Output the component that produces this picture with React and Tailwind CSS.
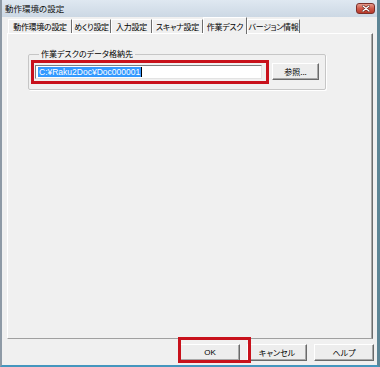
const tabs = [
  { label: '動作環境の設定', w: 'w-[64px]' },
  { label: 'めくり設定', w: 'w-[39px]' },
  { label: '入力設定', w: 'w-[41px]' },
  { label: 'スキャナ設定', w: 'w-[51px]' },
  { label: '作業デスク', w: 'w-[44px]', active: true },
  { label: 'バージョン情報', w: 'w-[53px]' },
]

const jp = "font-['MS_UI_Gothic','Noto_Sans_CJK_JP',sans-serif] [font-feature-settings:'palt']"

const WinButton = ({ children, className = '' }) => (
  <div
    className={`h-[17px] flex items-center justify-center bg-[#ededed] border border-t-white border-l-white border-b-[#6a6a6a] border-r-[#6a6a6a] shadow-[inset_-1px_-1px_0_#a8a8a8] text-[8px] leading-none text-black ${className}`}
  >
    {children}
  </div>
)

export default function App() {
  return (
    <div className={`w-[380px] h-[367px] bg-[#f0f0f0] flex flex-col relative overflow-hidden border-l-2 border-l-[#8e9aa6] border-r-[3px] border-r-[#5d8595] border-b-2 border-b-[#4596be] ${jp}`}>
      {/* title bar */}
      <div className="h-[17px] shrink-0 flex items-center justify-between pl-[3px] pr-[2px] bg-gradient-to-b from-[#dfe8f1] to-[#ccd8e4]">
        <span className="text-[8.5px] leading-none text-[#111]">動作環境の設定</span>
        <div className="w-[19px] h-[11px] rounded-[3px] border border-[#7b302a] bg-gradient-to-b from-[#e59a8c] via-[#cf5a4a] to-[#b8382a] flex items-center justify-center">
          <svg width="8" height="7" viewBox="0 0 8 7">
            <path d="M1 1 L7 6 M7 1 L1 6" stroke="#5a1a14" strokeWidth="2.4" strokeLinecap="round" />
            <path d="M1 1 L7 6 M7 1 L1 6" stroke="#fff" strokeWidth="1.3" strokeLinecap="round" />
          </svg>
        </div>
      </div>

      {/* tab strip */}
      <div className="h-[16px] shrink-0 flex items-end pl-[6px] relative z-10">
        {tabs.map((t) =>
          t.active ? (
            <div
              key={t.label}
              className={`${t.w} h-[17px] -mb-[1px] pt-[1px] bg-[#f0f0f0] border-l border-t border-l-white border-t-white border-r border-r-[#6d6d6d] flex items-center justify-center text-[8px] tracking-[-0.3px] leading-none text-black whitespace-nowrap`}
            >
              {t.label}
            </div>
          ) : (
            <div
              key={t.label}
              className={`${t.w} h-[14px] border-l border-t border-l-white border-t-white border-r border-r-[#6d6d6d] flex items-center justify-center text-[8px] tracking-[-0.3px] leading-none text-black whitespace-nowrap`}
            >
              {t.label}
            </div>
          )
        )}
      </div>

      {/* tab panel */}
      <div className="h-[306px] shrink-0 ml-[5px] mr-[4px] border border-t-white border-l-white border-b-[#a0a0a0] border-r-[#6d6d6d] shadow-[inset_-1px_0_0_#a9a9a9]">
        <fieldset className="mt-[15px] ml-[20px] mr-[46px] border border-[#c6c6c6] rounded-[2px] shadow-[1px_1px_0_#ffffff] pl-[6px] pr-[5px] pt-[4px] pb-[9px]">
          <legend className="ml-[4px] px-[2px] text-[8px] leading-[10px] text-black">作業デスクのデータ格納先</legend>
          <div className="flex items-center">
            <div className="w-[227px] h-[14px] bg-white border border-[#7d7d7d] border-b-[#e3e3e3] border-r-[#e3e3e3] flex items-center pl-[2px]">
              <span className="bg-[#3399ff] text-white font-['Liberation_Sans',Arial,sans-serif] text-[8.5px] leading-[10px] px-[1px]">
                C:¥Raku2Doc¥Doc000001
              </span>
              <span className="w-[1px] h-[10px] bg-black" />
            </div>
            <WinButton className="w-[47px] ml-[10px]">参照...</WinButton>
          </div>
        </fieldset>
      </div>

      {/* buttons */}
      <div className="flex-1 flex items-start justify-end gap-[7px] pt-[5px] pr-[3px]">
        <WinButton className="w-[60px] font-['Liberation_Sans',Arial,sans-serif]">OK</WinButton>
        <WinButton className="w-[60px]">キャンセル</WinButton>
        <WinButton className="w-[60px]">ヘルプ</WinButton>
      </div>

      {/* red annotation boxes */}
      <div className="absolute left-[29px] top-[60px] w-[238px] h-[24px] border-[3px] border-[#c8111b] pointer-events-none" />
      <div className="absolute left-[176px] top-[337px] w-[73px] h-[26px] border-[3px] border-[#c8111b] pointer-events-none" />
    </div>
  )
}
